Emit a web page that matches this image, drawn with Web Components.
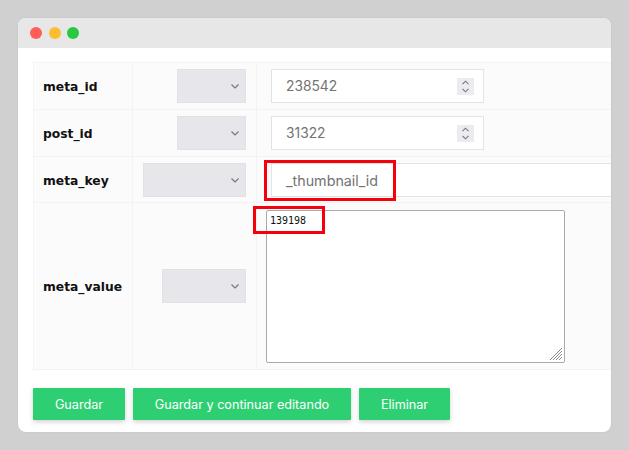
<!DOCTYPE html>
<html>
<head>
<meta charset="utf-8">
<style>
html, body { margin: 0; height: 100%; }
body { background: #d0d0d0; font-family: Inter, "Liberation Sans", sans-serif; overflow: hidden; }
</style>
</head>
<body>

<mac-window>
  <change-table>
    <field-row label="meta_id" select-width="69" style="--row-h:47px">
      <number-box value="238542"></number-box>
    </field-row>
    <field-row label="post_id" select-width="69" style="--row-h:47px">
      <number-box value="31322"></number-box>
    </field-row>
    <field-row label="meta_key" select-width="103" style="--row-h:46px">
      <text-box value="_thumbnail_id"></text-box>
    </field-row>
    <field-row label="meta_value" select-width="84" style="--row-h:167px">
      <area-box value="139198"></area-box>
    </field-row>
  </change-table>
  <button-bar>
    <green-button style="--w:92px">Guardar</green-button>
    <green-button style="--w:218px">Guardar y continuar editando</green-button>
    <green-button style="--w:91px">Eliminar</green-button>
  </button-bar>
</mac-window>

<script>
class MacWindow extends HTMLElement
{
    connectedCallback()
    {
        var shadow = this.attachShadow({mode: "open"});
        shadow.innerHTML =
        `<style>
        :host
        {
            display: block;
            box-sizing: border-box;
            width: 593px;
            height: 414px;
            margin: 18px 0 0 18px;
            background: #fff;
            border-radius: 8px;
            overflow: hidden;
            box-shadow: 0 0 2px rgba(0,0,0,0.08);
        }
        .bar
        {
            display: flex;
            align-items: center;
            gap: 6.5px;
            height: 30px;
            padding-left: 12px;
            background: #e7e7e7;
        }
        .dot { width: 12px; height: 12px; border-radius: 50%; }
        .body { padding: 14px 0 0 15px; }
        </style>
        <div class="bar">
            <div class="dot" style="background:#ff5f57"></div>
            <div class="dot" style="background:#febc2e"></div>
            <div class="dot" style="background:#28c840"></div>
        </div>
        <div class="body"><slot></slot></div>`;
    }
}

class ChangeTable extends HTMLElement
{
    connectedCallback()
    {
        var shadow = this.attachShadow({mode: "open"});
        shadow.innerHTML =
        `<style>
        :host
        {
            display: block;
            background: #fbfbfb;
            border-left: 1px solid #f5f5f6;
            border-top: 1px solid #f5f5f6;
            margin-right: 0;
        }
        </style>
        <slot></slot>`;
    }
}

class FieldRow extends HTMLElement
{
    connectedCallback()
    {
        var shadow = this.attachShadow({mode: "open"});
        shadow.innerHTML =
        `<style>
        :host
        {
            display: grid;
            grid-template-columns: 99px 124px 1fr;
            height: var(--row-h);
            box-sizing: border-box;
            border-bottom: 1px solid #f3f3f4;
            color: #111;
        }
        .label
        {
            display: flex;
            align-items: center;
            padding: 2px 0 0 9px;
            font: bold 12.3px "DejaVu Sans", sans-serif;
            border-right: 1px solid #f3f3f4;
        }
        .op
        {
            display: flex;
            align-items: center;
            justify-content: flex-end;
            padding-right: 10px;
            border-right: 1px solid #f3f3f4;
        }
        .select
        {
            display: flex;
            align-items: center;
            justify-content: flex-end;
            box-sizing: border-box;
            height: 34px;
            padding-right: 4px;
            background: #e6e6eb;
            border: 1px solid #e2e2e6;
        }
        .value { display: flex; min-width: 0; overflow: hidden; }
        </style>
        <div class="label">${this.getAttribute("label")}</div>
        <div class="op">
            <div class="select" style="width:${this.getAttribute("select-width")}px">
                <svg width="12" height="12" viewBox="0 0 12 12"><path d="M2.5 4.5 6 8l3.5-3.5" fill="none" stroke="#76767c" stroke-width="1.2"/></svg>
            </div>
        </div>
        <div class="value"><slot></slot></div>`;
    }
}

class NumberBox extends HTMLElement
{
    connectedCallback()
    {
        var shadow = this.attachShadow({mode: "open"});
        shadow.innerHTML =
        `<style>
        :host
        {
            display: flex;
            align-items: center;
            justify-content: space-between;
            box-sizing: border-box;
            width: 213px;
            height: 34px;
            margin: 6px 0 0 14px;
            padding: 0 9px 0 14px;
            background: #fff;
            border: 1px solid #e3e3e5;
            color: #737373;
            font-size: 13.8px;
        }
        .spin
        {
            display: flex;
            align-items: center;
            justify-content: center;
            width: 17px;
            height: 17px;
            background: #ececf0;
        }
        </style>
        <span>${this.getAttribute("value")}</span>
        <div class="spin">
            <svg width="11" height="15" viewBox="0 0 11 15"><path d="M2.5 5.2 5.5 2.2l3 3M2.5 9.8l3 3 3-3" fill="none" stroke="#77777c" stroke-width="1.1"/></svg>
        </div>`;
    }
}

class TextBox extends HTMLElement
{
    connectedCallback()
    {
        var shadow = this.attachShadow({mode: "open"});
        shadow.innerHTML =
        `<style>
        :host
        {
            position: relative;
            display: flex;
            align-items: center;
            box-sizing: border-box;
            flex: 1;
            height: 34px;
            margin: 6px 0 0 14px;
            padding-left: 14px;
            background: #fff;
            border: 1px solid #e3e3e5;
            border-right: 0;
            color: #737373;
            font-size: 14.3px;
        }
        </style>
        ${this.getAttribute("value")}`;
    }
}

class AreaBox extends HTMLElement
{
    connectedCallback()
    {
        var shadow = this.attachShadow({mode: "open"});
        shadow.innerHTML =
        `<style>
        :host
        {
            position: relative;
            display: block;
            box-sizing: border-box;
            width: 299px;
            height: 153px;
            margin: 7px 0 0 9px;
            padding: 3px 0 0 3px;
            background: #fff;
            border: 1px solid #a9a9b4;
            border-radius: 2px;
            color: #111;
            font: 10px/13px "DejaVu Sans Mono", monospace;
        }
        svg { position: absolute; right: 1px; bottom: 1px; }
        </style>
        ${this.getAttribute("value")}
        <svg width="14" height="14" viewBox="0 0 14 14"><path d="M1 13 13 1M4 13l9-9M7 13l6-6M10 13l3-3" stroke="#8e8e8e" stroke-width="1" fill="none"/></svg>`;
    }
}

class ButtonBar extends HTMLElement
{
    connectedCallback()
    {
        var shadow = this.attachShadow({mode: "open"});
        shadow.innerHTML =
        `<style>
        :host { display: flex; gap: 8px; margin-top: 18px; }
        </style>
        <slot></slot>`;
    }
}

class GreenButton extends HTMLElement
{
    connectedCallback()
    {
        var shadow = this.attachShadow({mode: "open"});
        shadow.innerHTML =
        `<style>
        :host
        {
            display: flex;
            align-items: center;
            justify-content: center;
            width: var(--w);
            height: 32px;
            background: #2ecf73;
            color: #fff;
            font-size: 12.65px;
            font-weight: 400;
            border-radius: 1px;
            box-shadow: 0 2px 5px rgba(0,0,0,0.18);
        }
        </style>
        <slot></slot>`;
    }
}

// red marks drawn over the form
class RedMark extends HTMLElement
{
    connectedCallback()
    {
        var shadow = this.attachShadow({mode: "open"});
        shadow.innerHTML =
        `<style>
        :host
        {
            position: absolute;
            box-sizing: border-box;
            border: 3px solid #f5000c;
            pointer-events: none;
        }
        </style>`;
    }
}

customElements.define("mac-window", MacWindow);
customElements.define("change-table", ChangeTable);
customElements.define("field-row", FieldRow);
customElements.define("number-box", NumberBox);
customElements.define("text-box", TextBox);
customElements.define("area-box", AreaBox);
customElements.define("button-bar", ButtonBar);
customElements.define("green-button", GreenButton);
customElements.define("red-mark", RedMark);
</script>
<red-mark style="left:264px;top:160px;width:132px;height:41px"></red-mark>
<red-mark style="left:253px;top:206px;width:72px;height:28px"></red-mark>
</body>
</html>
